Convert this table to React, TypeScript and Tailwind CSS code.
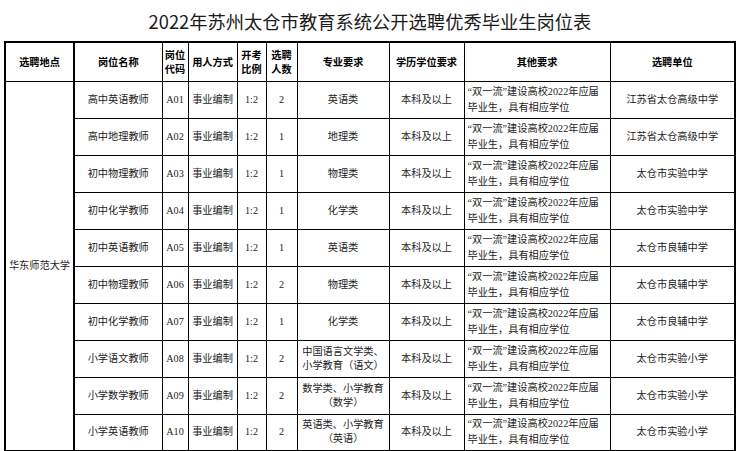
import React from "react";

const other = (
  <>
    “双一流”建设高校2022年应届
    <br />
    毕业生，具有相应学位
  </>
);

type Row = {
  name: string;
  code: string;
  num: string;
  major: React.ReactNode;
  unit: string;
};

const rows: Row[] = [
  { name: "高中英语教师", code: "A01", num: "2", major: "英语类", unit: "江苏省太仓高级中学" },
  { name: "高中地理教师", code: "A02", num: "1", major: "地理类", unit: "江苏省太仓高级中学" },
  { name: "初中物理教师", code: "A03", num: "1", major: "物理类", unit: "太仓市实验中学" },
  { name: "初中化学教师", code: "A04", num: "1", major: "化学类", unit: "太仓市实验中学" },
  { name: "初中英语教师", code: "A05", num: "1", major: "英语类", unit: "太仓市良辅中学" },
  { name: "初中物理教师", code: "A06", num: "2", major: "物理类", unit: "太仓市良辅中学" },
  { name: "初中化学教师", code: "A07", num: "1", major: "化学类", unit: "太仓市良辅中学" },
  {
    name: "小学语文教师",
    code: "A08",
    num: "2",
    major: (
      <>
        中国语言文学类、
        <br />
        小学教育（语文）
      </>
    ),
    unit: "太仓市实验小学",
  },
  {
    name: "小学数学教师",
    code: "A09",
    num: "2",
    major: (
      <>
        数学类、小学教育
        <br />
        （数学）
      </>
    ),
    unit: "太仓市实验小学",
  },
  {
    name: "小学英语教师",
    code: "A10",
    num: "2",
    major: (
      <>
        英语类、小学教育
        <br />
        （英语）
      </>
    ),
    unit: "太仓市实验小学",
  },
];

const td = "border border-black text-center align-middle p-0";
const th = "border border-black text-center align-middle p-0 font-bold leading-[14px]";

export default function App() {
  return (
    <div
      className="w-[740px] h-[451px] overflow-hidden bg-white text-[#1c1c1c]"
      style={{ fontFamily: '"Liberation Serif", "Noto Sans CJK SC", serif' }}
    >
      <div
        className="h-[41px] flex items-center justify-center pt-[2px] text-[18.3px] text-[#1a1a1a]"
        style={{ fontFamily: '"Noto Sans CJK SC", sans-serif' }}
      >
        2022年苏州太仓市教育系统公开选聘优秀毕业生岗位表
      </div>
      <table className="ml-[4px] w-[730px] table-fixed border-collapse border-2 border-black text-[10.2px] leading-[14px]">
        <colgroup>
          <col className="w-[69px]" />
          <col className="w-[88px]" />
          <col className="w-[26px]" />
          <col className="w-[49px]" />
          <col className="w-[29px]" />
          <col className="w-[31px]" />
          <col className="w-[92px]" />
          <col className="w-[75px]" />
          <col className="w-[146px]" />
          <col className="w-[125px]" />
        </colgroup>
        <thead>
          <tr className="h-[39px] text-black" style={{ fontFamily: '"Noto Sans CJK SC", sans-serif' }}>
            <th className={th + " border-r-2"}>选聘地点</th>
            <th className={th}>岗位名称</th>
            <th className={th}>
              <div>岗位</div>
              <div>代码</div>
            </th>
            <th className={th}>用人方式</th>
            <th className={th}>
              <div>开考</div>
              <div>比例</div>
            </th>
            <th className={th}>
              <div>选聘</div>
              <div>人数</div>
            </th>
            <th className={th}>专业要求</th>
            <th className={th}>学历学位要求</th>
            <th className={th}>其他要求</th>
            <th className={th}>选聘单位</th>
          </tr>
        </thead>
        <tbody>
          {rows.map((r, i) => (
            <tr key={r.code} className="h-[37px]">
              {i === 0 && (
                <td rowSpan={10} className={td + " border-r-2"}>
                  华东师范大学
                </td>
              )}
              <td className={td}>{r.name}</td>
              <td className={td}>{r.code}</td>
              <td className={td}>事业编制</td>
              <td className={td}>1:2</td>
              <td className={td}>{r.num}</td>
              <td className={td}>{r.major}</td>
              <td className={td}>本科及以上</td>
              <td className={td + " !text-left pl-[3px] leading-[16px]"}>{other}</td>
              <td className={td}>{r.unit}</td>
            </tr>
          ))}
        </tbody>
      </table>
    </div>
  );
}
